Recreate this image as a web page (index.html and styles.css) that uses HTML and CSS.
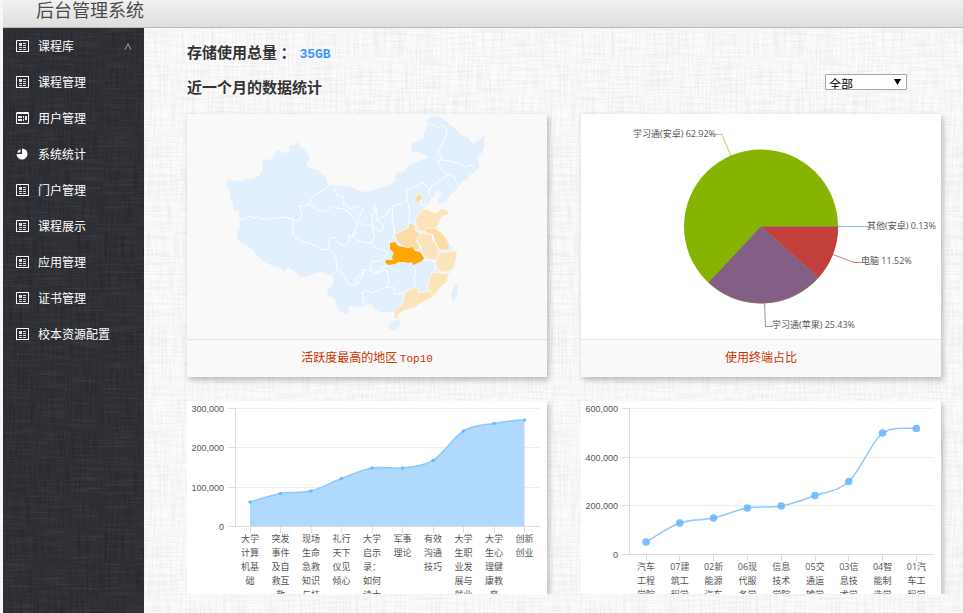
FILE: index.html
```html
<!DOCTYPE html>
<html lang="zh-CN">
<head>
<meta charset="utf-8">
<title>后台管理系统</title>
<link rel="stylesheet" href="styles.css">
</head>
<body>
<svg class="sprite" aria-hidden="true">
  <symbol id="list" viewBox="0 0 13 12">
    <path fill="none" stroke="#fff" d="M.5 12V.5h12V12M0 11.5h13" />
    <path fill="#fff" d="M3 3h3v3H3zM7 3h3v1H7zM7 5h3v1H7zM3 7h3v1H3zM7 7h3v1H7zM3 9h3v1H3zM7 9h3v1H7z" opacity=".85"/>
  </symbol>
  <symbol id="card" viewBox="0 0 13 12">
    <path fill="none" stroke="#fff" d="M.5 .5h12v11H.5zM0 1.5h13"/>
    <path fill="#fff" d="M2 4h4v2H2zM7 4h1v2H7zM9 4h2v4H9zM2 7h4v2H2zM7 7h1v2H7z" opacity=".9"/>
  </symbol>
  <symbol id="pie" viewBox="0 0 13 12">
    <path fill="#fff" d="M6 .5V6H.5A5.500 5.500 0 1 0 6 .5zM4.500 1.200V4.500H1A5 5 0 0 1 4.500 1.200z"/>
  </symbol>
</svg>
<header class="topbar"><h1>后台管理系统</h1></header>
<div class="layout">
  <nav class="sidebar">
    <a href="#"><svg class="icon"><use href="#list"/></svg><span>课程库</span><svg class="chevron" viewBox="0 0 8 7"><path d="M1 6.500 4 .8 7 6.500"/></svg></a>
    <a href="#"><svg class="icon"><use href="#list"/></svg><span>课程管理</span></a>
    <a href="#"><svg class="icon"><use href="#card"/></svg><span>用户管理</span></a>
    <a href="#"><svg class="icon"><use href="#pie"/></svg><span>系统统计</span></a>
    <a href="#"><svg class="icon"><use href="#list"/></svg><span>门户管理</span></a>
    <a href="#"><svg class="icon"><use href="#list"/></svg><span>课程展示</span></a>
    <a href="#"><svg class="icon"><use href="#list"/></svg><span>应用管理</span></a>
    <a href="#"><svg class="icon"><use href="#list"/></svg><span>证书管理</span></a>
    <a href="#"><svg class="icon"><use href="#list"/></svg><span>校本资源配置</span></a>
  </nav>
  <main class="content">
    <h2>存储使用总量 ：<span class="amount">35GB</span></h2>
    <div class="filter">
      <h2>近一个月的数据统计</h2>
      <select aria-label="范围"><option>全部</option></select>
    </div>
    <div class="cards">
      <section class="card">
        <svg class="map" viewBox="187 114 360 225">
          <g class="land">
            <path d="M227 182L229 180 232 181 234 180 238 181 241 182 245 179 252 179 259 176 261 173 263 171 263 160 268 159 272 161 274 155 278 150 282 152 287 153 289 151 289 146 292 145 295 145 297 142 299 144 300 147 304 149 307 152 309 156 309 160 306 166 311 169 318 170 322 174 326 177 328 185 333 185 343 186 352 187 360 191 367 192 378 189 387 186 392 184 397 179 395 177 396 172 400 173 405 171 407 167 413 164 418 161 428 158 424 154 418 152 411 151 412 143 415 143 419 139 423 139 425 130 428 125 425 121 430 118 435 116 443 118 449 124 453 127 458 132 465 137 468 138 473 144 480 139 485 135 484 147 482 153 478 155 479 167 475 172 470 175 467 180 462 181 457 189 450 195 447 200 442 204 438 203 437 200 440 196 442 192 437 191 432 199 428 204 423 209 427 209 433 212 437 213 441 208 449 211 449 214 442 217 437 227 442 233 449 243 451 250 457 251 457 255 455 265 449 274 447 282 440 288 433 297 422 303 413 308 403 311 398 314 397 319 394 318 394 312 387 312 381 312 375 310 372 305 360 307 353 306 348 307 349 311 346 314 341 312 337 307 336 302 333 297 327 296 328 290 333 285 333 275 328 275 325 273 320 272 314 273 308 276 300 277 296 272 288 267 283 272 281 268 273 266 266 263 262 260 257 255 252 249 246 245 243 244 237 239 237 232 240 228 239 212 233 209 233 203 230 199 230 190 227 187z"/>
            <path d="M451 297L454 286 458 284 458 293 454 301zM388 325L393 321 400 320 401 323 395 331 389 329z"/>
          </g>
          <path class="border" d="M240 219L245 219 250 216 253 218 257 217 262 219 267 219 280 218 284 217 292 219 297 221 300 220 302 215 299 206 304 206 309 204 312 198 317 194 323 190 329 185M309 204L317 210 327 212 328 209 332 206 337 208 345 209 353 217 356 220 357 227 353 233 352 237M293 220L293 235 302 242 309 243 317 246 322 250 328 249 330 238 335 237 338 243 345 246 350 241 348 236 353 237 355 232 358 232M328 249L333 253 336 258 337 270 333 274M337 268L343 274 349 285 355 285 357 277 364 273 363 270 370 270M334 185L335 192 338 196 344 197 343 204 347 205 350 209 358 206 363 209 361 213 358 219 361 224 367 226 371 224 373 220 372 214 376 212 373 207 375 205 377 211 376 220 382 217 387 215 388 211 393 206 400 204 407 199 407 190 417 186 423 183 430 190 432 186 445 177 447 175 440 167 437 161 442 160 441 155 438 152 445 139 447 129 442 125 439 128 433 125 426 121M442 160L450 161 458 163 465 167 471 165 475 170M447 175L452 175 455 178 458 187M407 199L410 212 408 224M430 190L429 194 432 199M418 202L421 200 421 205 426 205M393 206L392 219 395 234 389 243M376 220L384 225 382 232 375 229 372 224 373 233 375 235 372 243 363 242 357 240 353 237M372 243L375 247 380 249 388 252 383 260 372 262 370 270 375 273 383 267 389 265M363 270L362 278 357 285M375 273L387 270 389 280 387 287 379 290 372 293 367 290 362 293 364 299 362 302 368 305 372 305M387 287L393 287 395 294 403 293 407 289M413 266L416 271 414 278 415 288M423 260L430 260 437 264 434 272"/>
          <g class="light">
            <path d="M417 228L415 220 418 214 423 210 427 209 433 212 437 213 441 208 449 211 449 214 442 217 437 227 433 230 428 230 422 232z"/>
            <path d="M418 235L423 232 428 234 432 233 433 240 437 245 439 252 437 260 428 260 422 253 420 245 416 240z"/>
            <path d="M439 252L446 252 450 251 457 251 457 255 455 265 452 270 447 272 440 272 435 264z"/>
            <path d="M433 272L440 273 449 274 447 282 440 288 433 297 428 292 427 288 430 277z"/>
            <path d="M394 318L394 312 396 309 402 305 405 293 412 288 418 288 418 292 424 292 430 290 433 297 422 303 413 308 403 311 398 314 398 319z"/>
          </g>
          <g class="mid">
            <path d="M414 200L418 193 422 196 422 199 418 203 415 202z"/>
            <path d="M424 232L427 228 435 228 442 233 446 238 449 243 450 248 446 251 439 249 435 242 433 235z"/>
            <path d="M394 235L403 230 408 228 409 223 416 225 415 230 420 234 416 240 420 246 418 250 405 247 398 243z"/>
          </g>
          <path class="hot" d="M390 243L395 242 398 246 403 247 408 248 412 247 415 251 420 252 424 258 422 261 413 265 412 262 408 263 405 262 398 262 395 264 388 265 385 262 386 260 393 260 392 257 394 253 390 249z"/>
          <path class="land" d="M449 246l3 0 1 3-3 2-2-2z"/>
        </svg>
        <p>活跃度最高的地区 <span class="latin">Top10</span></p>
      </section>
      <section class="card card-white">
        <svg class="pie" viewBox="581 114 360 225">
          <circle cx="761" cy="226.500" r="77" fill="#86b400"/>
          <path fill="#c23f3c" stroke="#c23f3c" stroke-width=".4" d="M761 226.500H838A77 77 0 0 1 818.500 277.500z"/>
          <path fill="#835f85" stroke="#9a789c" stroke-width=".4" d="M761 226.500L818.500 277.500A77 77 0 0 1 708.500 282.500z"/>
          <g fill="none">
            <path stroke="#b5d263" d="M731 156L722 134.500H714"/>
            <path stroke="#6fa08a" stroke-width=".6" d="M761 226.500H838"/>
            <path stroke="#7cc6d6" d="M838 226.500H869"/>
            <path stroke="#d87a77" d="M833 254.500L854 262.500H862"/>
            <path stroke="#a98dab" d="M764.500 303.500L765.500 326.500H773"/>
          </g>
          <g class="label">
            <text x="633" y="137">学习通(安卓) 62.92%</text>
            <text x="867" y="229">其他(安卓) 0.13%</text>
            <text x="861" y="264">电脑 11.52%</text>
            <text x="772" y="328">学习通(苹果) 25.43%</text>
          </g>
        </svg>
        <p>使用终端占比</p>
      </section>
      <section class="card card-white card-cut"><svg id="courses" viewBox="0 0 360 193"></svg></section>
      <section class="card card-white card-cut"><svg id="colleges" viewBox="0 0 360 193"></svg></section>
    </div>
  </main>
</div>
<script src="charts.js"></script>
</body>
</html>
```

FILE: charts.js
```js
function drawChart(id, o) {
  const parts = [];
  o.ticks.forEach((label, i) => {
    const y = Math.round(7 + (o.base - 7) * i / (o.ticks.length - 1)) + 0.5;
    const last = i === o.ticks.length - 1;
    parts.push(`<path class="${last ? 'axis' : 'rule'}" d="M${o.left} ${y}H353"/>`);
    parts.push(`<path class="axis" d="M${o.left - 7} ${y}H${o.left}"/>`);
    parts.push(`<text class="tick" x="${o.left - 11}" y="${y + 3}">${label}</text>`);
  });
  parts.push(`<path class="axis" d="M${o.left + 0.5} 7V${o.base}"/>`);

  const pts = o.values.map((y, i) => [o.first + o.step * i, y]);
  const slope = pts.map((p, i) => {
    if (i === 0 || i === pts.length - 1) return 0;
    return (pts[i + 1][1] - pts[i - 1][1]) / 2;
  });
  slope[0] = pts[1][1] - pts[0][1];
  let line = `M${pts[0]}`;
  for (let i = 1; i < pts.length; i++) {
    const [x0, y0] = pts[i - 1];
    const [x1, y1] = pts[i];
    const min = Math.min(y0, y1) - 2;
    const max = Math.max(y0, y1) + 1;
    const clamp = v => Math.max(min, Math.min(max, v));
    const third = o.step / 3;
    line += `C${x0 + third} ${clamp(y0 + slope[i - 1] / 3)} ${x1 - third} ${clamp(y1 - slope[i] / 3)} ${x1} ${y1}`;
  }
  if (o.area) {
    parts.push(`<path class="area" d="${line}V${o.base}H${pts[0][0]}z"/>`);
  }
  parts.push(`<path class="line" d="${line}"/>`);
  pts.forEach(([x, y], i) => {
    parts.push(`<circle class="dot" cx="${x}" cy="${y}" r="${o.dot}"/>`);
    parts.push(`<path class="axis" d="M${Math.floor(x) + 0.5} ${o.base + 1}v6"/>`);
    o.names[i].split(' ').forEach((row, n) => {
      parts.push(`<text class="name" x="${x}" y="${o.base + 16 + n * 14}">${row}</text>`);
    });
  });
  document.getElementById(id).innerHTML = parts.join('');
}

drawChart('courses', {
  ticks: ['300,000', '200,000', '100,000', '0'],
  left: 48, base: 125, first: 63, step: 30.5, dot: 1.8, area: true,
  values: [101, 92.5, 90, 77.5, 67, 67, 59.5, 30, 22.5, 19],
  names: ['大学 计算 机基 础', '突发 事件 及自 救互 救', '现场 生命 急救 知识 与技', '礼行 天下 仪见 倾心',
    '大学 启示 录： 如何 读大', '军事 理论', '有效 沟通 技巧', '大学 生职 业发 展与 就业', '大学 生心 理健 康教 育', '创新 创业']
});

drawChart('colleges', {
  ticks: ['600,000', '400,000', '200,000', '0'],
  left: 48, base: 153, first: 65, step: 33.8, dot: 3.8, area: false,
  values: [141, 122, 117, 107, 105, 94.5, 80.5, 32, 27.5],
  names: ['汽车 工程 学院', '07建 筑工 程学', '02新 能源 汽车', '06现 代服 务学', '信息 技术 学院',
    '05交 通运 输学', '03信 息技 术学', '04智 能制 造学', '01汽 车工 程学']
});
```

FILE: styles.css
```css
* { box-sizing: border-box; }

body {
  margin: 0;
  padding-left: 3px;
  min-height: 100vh;
  display: flex;
  flex-direction: column;
  background: #f6f6f6;
  color: #333;
  font: 12px "Noto Sans CJK SC", sans-serif;
}

h1, h2, p { margin: 0; }

.sprite { position: absolute; width: 0; height: 0; }

.topbar {
  height: 28px;
  padding-left: 33px;
  background: linear-gradient(#f1f1f1, #dedede);
  border-bottom: 1px solid #b9b9b9;
}

.topbar h1 {
  font-size: 18px;
  line-height: 18px;
  font-weight: 400;
  color: #4a4a4a;
}

.layout { flex: 1; display: flex; }

.sidebar {
  width: 141px;
  flex: none;
  background: #2f3036 url("data:image/svg+xml,%3Csvg xmlns='http://www.w3.org/2000/svg' width='300' height='300'%3E%3Cfilter id='a' x='0' y='0' width='1' height='1'%3E%3CfeTurbulence type='fractalNoise' baseFrequency='.5 .03' numOctaves='2' stitchTiles='stitch'/%3E%3CfeColorMatrix values='0 0 0 0 0 0 0 0 0 0 0 0 0 0 0 .45 0 0 0 -.19'/%3E%3C/filter%3E%3Cfilter id='b' x='0' y='0' width='1' height='1'%3E%3CfeTurbulence type='fractalNoise' baseFrequency='.03 .5' numOctaves='2' seed='4' stitchTiles='stitch'/%3E%3CfeColorMatrix values='0 0 0 0 .5 0 0 0 0 .5 0 0 0 0 .55 .2 0 0 0 -.09'/%3E%3C/filter%3E%3Crect width='300' height='300' filter='url(%23a)'/%3E%3Crect width='300' height='300' filter='url(%23b)'/%3E%3C/svg%3E");
}

.sidebar a {
  display: flex;
  align-items: center;
  height: 36px;
  padding: 0 12px 0 13px;
  color: #fff;
  text-decoration: none;
}

.sidebar span { padding-bottom: 2px; }

.icon { width: 13px; height: 12px; margin-right: 9px; }

.chevron {
  width: 8px;
  height: 7px;
  margin-left: auto;
  fill: none;
  stroke: #aaa;
}

.content {
  flex: 1;
  min-width: 0;
  padding: 11px 22px 19px 43px;
  background: #fcfcfc url("data:image/svg+xml,%3Csvg xmlns='http://www.w3.org/2000/svg' width='400' height='400'%3E%3Cfilter id='a' x='0' y='0' width='1' height='1'%3E%3CfeTurbulence type='fractalNoise' baseFrequency='.5 .03' numOctaves='2' stitchTiles='stitch'/%3E%3CfeColorMatrix values='0 0 0 0 0 0 0 0 0 0 0 0 0 0 0 .1 0 0 0 -.04'/%3E%3C/filter%3E%3Cfilter id='b' x='0' y='0' width='1' height='1'%3E%3CfeTurbulence type='fractalNoise' baseFrequency='.03 .5' numOctaves='2' seed='7' stitchTiles='stitch'/%3E%3CfeColorMatrix values='0 0 0 0 0 0 0 0 0 0 0 0 0 0 0 .1 0 0 0 -.04'/%3E%3C/filter%3E%3Crect width='400' height='400' filter='url(%23a)'/%3E%3Crect width='400' height='400' filter='url(%23b)'/%3E%3C/svg%3E");
}

h2 {
  font-size: 15px;
  line-height: 26px;
  font-weight: 700;
}

.amount {
  margin-left: 4px;
  color: #39f;
  font: bold 13px "Liberation Mono", monospace;
}

.filter {
  display: flex;
  justify-content: space-between;
  align-items: center;
  margin: 9px 34px 14px 0;
}

select {
  appearance: none;
  width: 82px;
  height: 16px;
  margin-bottom: 10px;
  padding: 1px 3px 0;
  border: 1px solid #a6a6a6;
  border-radius: 1px;
  color: #000;
  font: 12px/16px "Noto Sans CJK SC", sans-serif;
  background: #fff url("data:image/svg+xml,%3Csvg xmlns='http://www.w3.org/2000/svg' width='7' height='6'%3E%3Cpath d='M0 0h7L3.500 6z'/%3E%3C/svg%3E") no-repeat right 5px top 4px;
}

.cards {
  display: grid;
  grid-template-columns: 1fr 1fr;
  gap: 24px 34px;
}

.card {
  background: #f9f9f9;
  box-shadow: 2px 3px 6px rgba(0, 0, 0, .25);
}

.card svg { display: block; width: 100%; }

.card p {
  padding: 5px 0 9px;
  border-top: 1px solid #e3e3e3;
  background: #f9f9f9;
  color: #c30;
  line-height: 23px;
  text-align: center;
}

.card-white { background: #fff; }

.card-cut { clip-path: inset(0 -10px 0 0); }

.latin { font: 11px "Liberation Mono", monospace; }

.land { fill: #e2effc; }

.border { fill: none; stroke: #fff; stroke-width: 1; }

.light { fill: #fbe4ba; stroke: #fff; stroke-width: .7; }

.mid { fill: #fadda6; stroke: #fff; stroke-width: .7; }

.hot { fill: #ffa600; }

.label, .tick, .name {
  font-size: 9px;
  font-family: "Open Sans", "Noto Sans CJK SC", sans-serif;
  fill: #555;
}

.tick { text-anchor: end; font-family: "Liberation Sans", sans-serif; }

.name { text-anchor: middle; }

.rule { stroke: #eee; }

.axis { stroke: #ddd; }

.area { fill: #afdafe; }

.line { fill: none; stroke: #8bcaff; stroke-width: 1.5px; }

.dot { fill: #64b5ff; fill-opacity: .85; }
```
